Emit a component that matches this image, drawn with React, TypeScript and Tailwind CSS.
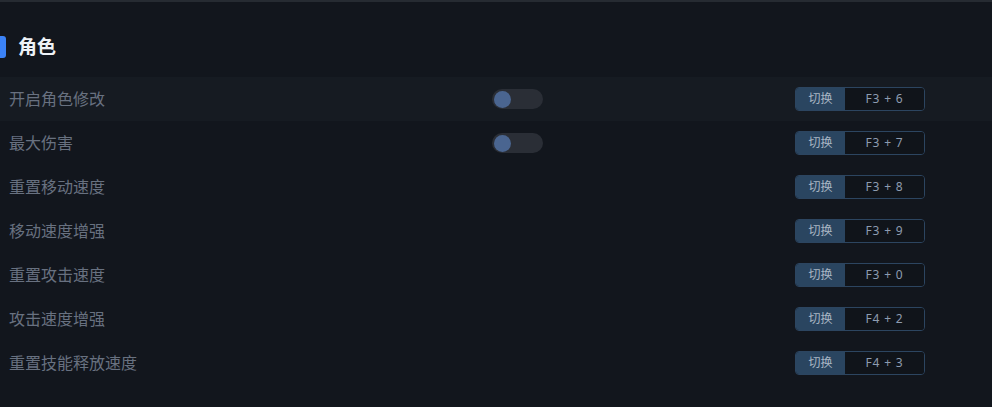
const rows = [
  { label: "开启角色修改", toggle: true, key: "F3 + 6" },
  { label: "最大伤害", toggle: true, key: "F3 + 7" },
  { label: "重置移动速度", toggle: false, key: "F3 + 8" },
  { label: "移动速度增强", toggle: false, key: "F3 + 9" },
  { label: "重置攻击速度", toggle: false, key: "F3 + 0" },
  { label: "攻击速度增强", toggle: false, key: "F4 + 2" },
  { label: "重置技能释放速度", toggle: false, key: "F4 + 3" },
];

function Toggle() {
  return (
    <div className="w-[51px] h-[20px] rounded-full bg-[#2a2e36] flex items-center pl-[2px]">
      <div className="w-[17px] h-[17px] rounded-full bg-[#4a6590]" />
    </div>
  );
}

function KeyBind({ keys }: { keys: string }) {
  return (
    <div className="flex h-[24px] w-[130px] rounded-[4px] border border-[#2c4560] overflow-hidden text-[12px]">
      <div className="w-[49px] flex items-center justify-center bg-[#2a4560] text-[#a9b6c4]">切换</div>
      <div className="flex-1 flex items-center justify-center bg-[#10141a] text-[#8e9cb0] tracking-[0.8px]">{keys}</div>
    </div>
  );
}

export default function App() {
  return (
    <div
      className="w-[992px] h-[407px] bg-[#12161d] border-t-2 border-[#262b32] overflow-hidden"
      style={{ fontFamily: '"Noto Sans", "Noto Sans CJK SC", sans-serif' }}
    >
      <div className="flex items-center h-[22px] mt-[34px] mb-[19px]">
        <div className="w-[6px] h-[22px] rounded-r-[3px] bg-[#3b82f6]" />
        <h2 className="ml-[12px] text-[19px] font-bold text-[#eef2f7] leading-none">角色</h2>
      </div>
      <div className="flex flex-col">
        {rows.map((r, i) => (
          <div
            key={r.label}
            className={`flex items-center h-[44px] ${i === 0 ? "bg-[#161b22]" : ""}`}
          >
            <div className="w-[492px] pl-[9px] text-[16px] text-[#687180]">{r.label}</div>
            <div className="w-[303px]">{r.toggle && <Toggle />}</div>
            <KeyBind keys={r.key} />
          </div>
        ))}
      </div>
    </div>
  );
}
